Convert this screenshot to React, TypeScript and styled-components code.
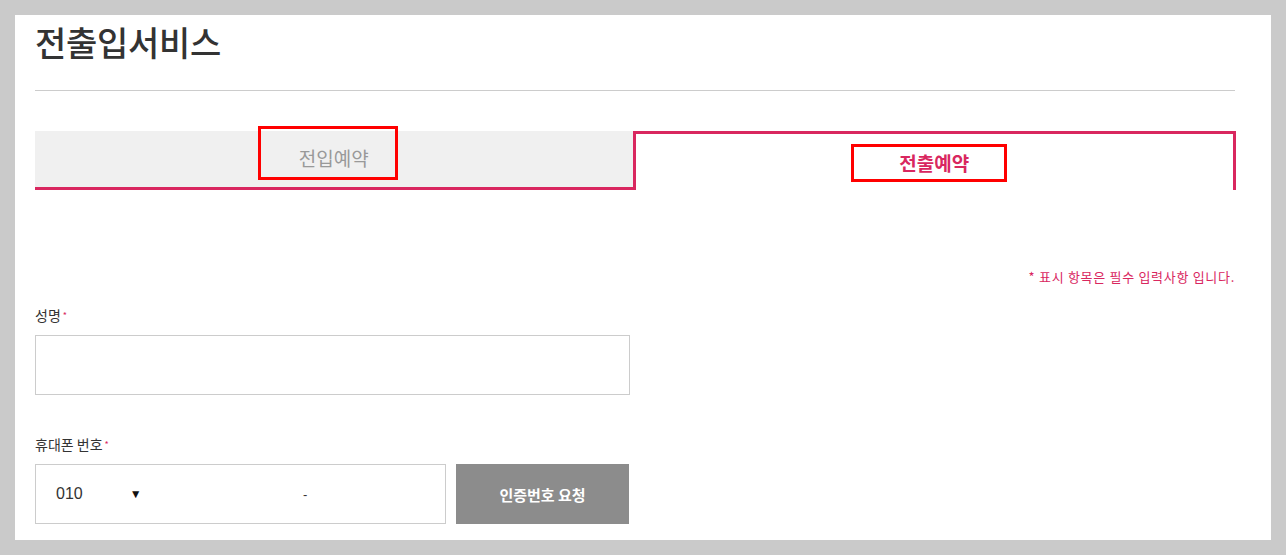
// CORE MODULES
import React from 'react'
import styled, { createGlobalStyle } from 'styled-components'

const PINK = '#d9275f'

const GlobalStyle = createGlobalStyle`
html, body {
    margin: 0;
    padding: 0;
}
body {
    background: #cacaca;
    font-family: "Noto Sans CJK KR", "Noto Sans", sans-serif;
    color: #333;
}
* {
    box-sizing: border-box;
}
`

const App: React.FC = () => {
    return (
        <>
            <GlobalStyle />
            <Page>
                <Card>
                    <Title>전출입서비스</Title>
                    <Divider />

                    <Tabs>
                        <Tab>전입예약</Tab>
                        <Tab active>전출예약</Tab>
                    </Tabs>

                    <Notice>* 표시 항목은 필수 입력사항 입니다.</Notice>

                    <Field>
                        <Label>성명<Required>*</Required></Label>
                        <TextInput type="text" />
                    </Field>

                    <Field gap={39}>
                        <Label>휴대폰 번호<Required>*</Required></Label>
                        <PhoneRow>
                            <PhoneBox>
                                <Prefix>
                                    010 <Caret>▼</Caret>
                                </Prefix>
                                <Dash>-</Dash>
                            </PhoneBox>
                            <GreyButton>인증번호 요청</GreyButton>
                        </PhoneRow>
                    </Field>

                    {/* review marks over the tabs */}
                    <Mark left={243} top={111} width={140} height={54} />
                    <Mark left={836} top={129} width={156} height={38} />
                </Card>
            </Page>
        </>
    )
}

const Page = styled.div`
padding: 15px 15px 15px 15px;
height: 555px;
overflow: hidden;
`

const Card = styled.div`
position: relative;
background: #fff;
height: 525px;
padding: 0 36px 0 20px;
overflow: hidden;
`

const Title = styled.h1`
margin: 0;
padding-top: 3px;
font-size: 34px;
line-height: 48px;
font-weight: 500;
color: #333;
letter-spacing: -0.3px;
`

const Divider = styled.div`
margin-top: 24px;
height: 1px;
background: #cccccc;
`

const Tabs = styled.div`
display: flex;
margin-top: 40px;
height: 59px;
`

const Tab = styled.div<{ active?: boolean }>`
flex: 1;
display: flex;
align-items: center;
justify-content: center;
font-size: 19px;
padding-bottom: ${props => props.active ? '0' : '3px'};
background: ${props => props.active ? '#fff' : '#f0f0f0'};
color: ${props => props.active ? PINK : '#999'};
font-weight: ${props => props.active ? 700 : 400};
border: 3px solid ${props => props.active ? PINK : 'transparent'};
border-bottom: ${props => props.active ? 'none' : `3px solid ${PINK}`};
border-top-width: ${props => props.active ? '3px' : '0'};
border-left-width: ${props => props.active ? '3px' : '0'};
border-right-width: ${props => props.active ? '3px' : '0'};
margin-right: ${props => props.active ? '-1px' : '0'};
`

const Notice = styled.p`
margin: 78px 0 0;
text-align: right;
font-size: 13px;
line-height: 18px;
letter-spacing: 0.7px;
color: ${PINK};
`

const Field = styled.div<{ gap?: number }>`
margin-top: ${props => props.gap ?? 19}px;
width: 595px;
`

const Label = styled.div`
font-size: 14px;
line-height: 20px;
color: #333;
margin-bottom: 9px;
`

const Required = styled.span`
color: ${PINK};
font-size: 9px;
vertical-align: 2px;
margin-left: 2px;
`

const TextInput = styled.input`
display: block;
width: 595px;
height: 60px;
border: 1px solid #cccccc;
outline: none;
padding: 0 15px;
font-size: 15px;
`

const PhoneRow = styled.div`
display: flex;
gap: 10px;
height: 60px;
`

const PhoneBox = styled.div`
width: 411px;
display: flex;
align-items: center;
border: 1px solid #cccccc;
padding-left: 20px;
font-family: "Liberation Sans", Arial, sans-serif;
font-size: 16px;
color: #333;
`

const Prefix = styled.span`
display: flex;
align-items: center;
width: 100px;
`

const Caret = styled.span`
font-size: 12px;
margin-left: 47px;
color: #111;
`

const Dash = styled.span`
margin-left: 147px;
font-size: 13px;
`

const GreyButton = styled.button`
width: 173px;
height: 60px;
border: none;
background: #8c8c8c;
color: #fff;
font-family: "Noto Sans CJK KR", sans-serif;
font-size: 15px;
font-weight: 700;
cursor: pointer;
`

const Mark = styled.div<{ left: number, top: number, width: number, height: number }>`
position: absolute;
left: ${props => props.left}px;
top: ${props => props.top}px;
width: ${props => props.width}px;
height: ${props => props.height}px;
border: 3px solid #ff0000;
pointer-events: none;
`

export default App
